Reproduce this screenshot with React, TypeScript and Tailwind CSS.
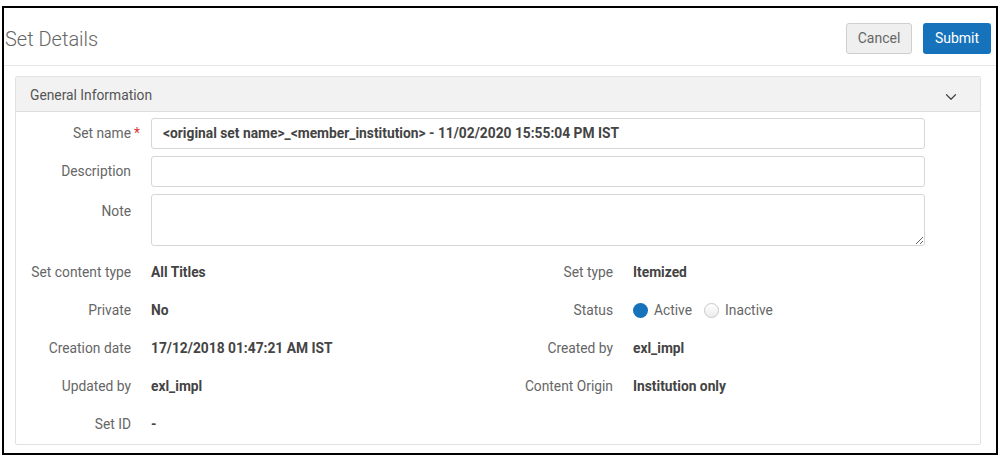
import { ChevronDown } from "lucide-react";

type Field = { label: string; value?: string; radio?: boolean };

const rows: [Field, Field | null][] = [
  [{ label: "Set content type", value: "All Titles" }, { label: "Set type", value: "Itemized" }],
  [{ label: "Private", value: "No" }, { label: "Status", radio: true }],
  [{ label: "Creation date", value: "17/12/2018 01:47:21 AM IST" }, { label: "Created by", value: "exl_impl" }],
  [{ label: "Updated by", value: "exl_impl" }, { label: "Content Origin", value: "Institution only" }],
  [{ label: "Set ID", value: "-" }, null],
];

function InfoCell({ field }: { field: Field | null }) {
  if (!field) return <div />;
  return (
    <div className="flex items-center">
      <div className="w-[115px] shrink-0 text-right text-[#666]">{field.label}</div>
      <div className="ml-[20px] flex items-center">
        {field.radio ? (
          <div className="flex items-center text-[#666]">
            <span className="h-[15px] w-[15px] rounded-full bg-[#1673bb]" />
            <span className="ml-[6px]">Active</span>
            <span className="ml-[12px] h-[15px] w-[15px] rounded-full border border-[#c8c8c8] bg-gradient-to-b from-white to-[#ececec]" />
            <span className="ml-[6px]">Inactive</span>
          </div>
        ) : (
          <span className="font-bold text-[#444]">{field.value}</span>
        )}
      </div>
    </div>
  );
}

export default function App() {
  return (
    <div className="h-[459px] w-[1000px] bg-white pt-[6px] pl-[2px] font-['Roboto',sans-serif] text-[13.8px]">
      <div className="flex h-[449px] w-[996px] flex-col border-2 border-black">
        {/* header */}
        <div className="flex items-center justify-between border-b border-[#e8e8e8] pt-[15px] pb-[11px] pl-px pr-[5px]">
          <h1 className="text-[20px] font-light text-[#666]">Set Details</h1>
          <div className="flex gap-[11px] text-[14px]">
            <button className="h-[31px] w-[66px] rounded-[3px] border border-[#cfcfcf] bg-[#efefef] text-[#666]">
              Cancel
            </button>
            <button className="h-[31px] w-[68px] rounded-[3px] bg-[#1673bb] text-white">Submit</button>
          </div>
        </div>

        {/* panel */}
        <div className="mt-[10px] ml-[11px] mr-[15px] flex h-[369px] flex-col rounded-[2px] border border-[#e2e2e2]">
          <div className="flex h-[35px] items-center justify-between border-b border-[#dedede] bg-[#f2f2f2] pt-[2px] pl-[14px] pr-[20px]">
            <span className="text-[#555]">General Information</span>
            <ChevronDown size={18} strokeWidth={1.6} className="mt-[4px] text-[#444]" />
          </div>

          <div className="flex flex-col pt-[6px]">
            <div className="flex items-center">
              <div className="w-[115px] text-right text-[#666]">
                Set name<span className="absolute ml-[3px] text-[#d33]">*</span>
              </div>
              <div className="ml-[20px] flex h-[31px] w-[774px] items-center rounded-[3px] border border-[#d6d6d6] px-[11px] font-bold text-[#444]">
                &lt;original set name&gt;_&lt;member_institution&gt; - 11/02/2020 15:55:04 PM IST
              </div>
            </div>
            <div className="mt-[7px] flex items-center">
              <div className="w-[115px] text-right text-[#666]">Description</div>
              <div className="ml-[20px] h-[31px] w-[774px] rounded-[3px] border border-[#d6d6d6]" />
            </div>
            <div className="mt-[7px] flex items-start">
              <div className="w-[115px] pt-[7px] text-right text-[#666]">Note</div>
              <textarea className="ml-[20px] h-[52px] w-[774px] rounded-[3px] border border-[#d6d6d6] outline-none" />
            </div>
          </div>

          <div className="mt-[7px] grid grid-cols-[482px_1fr]">
            {rows.map(([a, b], i) => (
              <div key={i} className="contents">
                <div className="h-[38px]">
                  <div className="flex h-full items-center">
                    <InfoCell field={a} />
                  </div>
                </div>
                <div className="h-[38px]">
                  <div className="flex h-full items-center">
                    <InfoCell field={b} />
                  </div>
                </div>
              </div>
            ))}
          </div>
        </div>
      </div>
    </div>
  );
}
